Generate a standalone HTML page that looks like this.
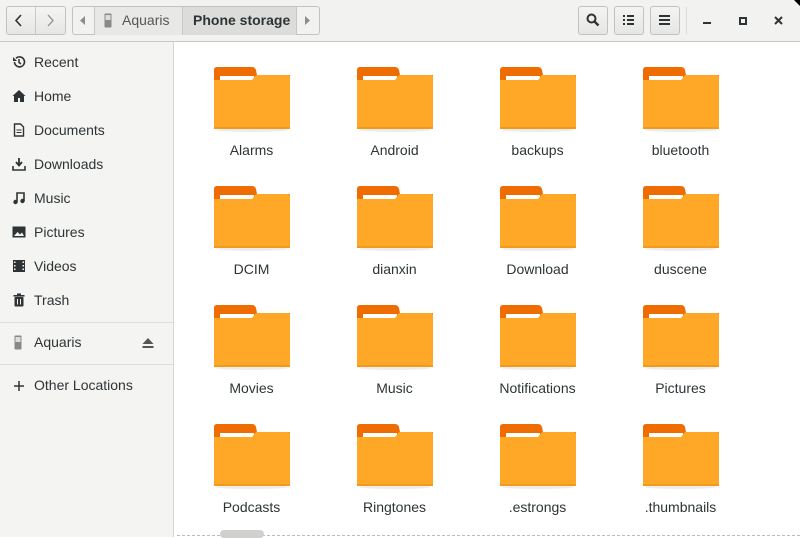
<!DOCTYPE html>
<html><head><style>
*{margin:0;padding:0;box-sizing:border-box}
body{width:800px;height:537px;overflow:hidden;background:#fff;font-family:"Liberation Sans","DejaVu Sans",sans-serif;font-size:14px;color:#2e3436;position:relative}
.hdr{position:absolute;left:0;top:0;width:800px;height:42px;background:#f2f2f1;border-bottom:1px solid #c8c8c5}
.btn{position:absolute;top:6px;height:29px;border:1px solid #c2c2be;border-radius:3px;background:linear-gradient(#f4f4f3,#e6e6e4)}
.side{position:absolute;left:0;top:42px;width:174px;height:495px;background:#f4f4f2;border-right:1px solid #d5d5d2}
.si{position:absolute;left:34px;font-size:14px;color:#2e3436}
.ic{position:absolute;left:12px;width:14px;height:14px}
.sep{position:absolute;left:0;width:173px;height:1px;background:#ddd}
.f{position:absolute;width:143px;text-align:center}
.f svg{display:block;margin:0 auto}
.f div{margin-top:9px;font-size:14px;color:#2e3436}
</style></head><body>
<div class="hdr">
 <div class="btn" style="left:6px;width:60px"></div>
 <div style="position:absolute;left:35px;top:7px;width:1px;height:27px;background:#c8c8c5"></div>
 <svg style="position:absolute;left:14px;top:14px" width="10" height="13"><path d="M7 1L2 6.5L7 12" stroke="#2e3436" stroke-width="1.6" fill="none"/></svg>
 <svg style="position:absolute;left:45px;top:14px" width="10" height="13"><path d="M3 1L8 6.5L3 12" stroke="#8a8e8f" stroke-width="1.3" fill="none"/></svg>
 <div class="btn" style="left:72px;width:248px;background:#f2f2f1"></div>
 <div style="position:absolute;left:94px;top:7px;width:88px;height:28px;background:#e8e8e6;border-left:1px solid #c8c8c5"></div>
 <div style="position:absolute;left:182px;top:7px;width:115px;height:28px;background:#dcdcda;border-left:1px solid #c8c8c5;border-right:1px solid #c8c8c5"></div>
 <svg style="position:absolute;left:80px;top:16px" width="6" height="9"><path d="M5 0L0 4.5L5 9z" fill="#8a8e8f"/></svg>
 <svg style="position:absolute;left:305px;top:16px" width="6" height="9"><path d="M0 0L5 4.5L0 9z" fill="#8a8e8f"/></svg>
 <svg style="position:absolute;left:104px;top:13px" width="8" height="15"><rect x="0.5" y="0.5" width="7" height="14" rx="1" fill="#888a85"/><rect x="1.5" y="2" width="5" height="5" fill="#ddd"/></svg>
 <div style="position:absolute;left:122px;top:12px;color:#555753">Aquaris</div>
 <div style="position:absolute;left:193px;top:12px;font-weight:bold;color:#2e3436">Phone storage</div>
 <div class="btn" style="left:578px;width:30px"></div>
 <svg style="position:absolute;left:586px;top:13px" width="14" height="14"><circle cx="5.5" cy="5.5" r="4" stroke="#2e3436" stroke-width="2" fill="none"/><path d="M8.5 8.5L12.5 12.5" stroke="#2e3436" stroke-width="2.4"/></svg>
 <div class="btn" style="left:614px;width:30px"></div>
 <svg style="position:absolute;left:623px;top:15px" width="12" height="11"><g fill="#2e3436"><rect x="0" y="0" width="2" height="2"/><rect x="0" y="4" width="2" height="2"/><rect x="0" y="8" width="2" height="2"/><rect x="4" y="0" width="7" height="2"/><rect x="4" y="4" width="7" height="2"/><rect x="4" y="8" width="7" height="2"/></g></svg>
 <div class="btn" style="left:650px;width:30px"></div>
 <svg style="position:absolute;left:659px;top:15px" width="12" height="11"><g fill="#2e3436"><rect x="0" y="0" width="11" height="2"/><rect x="0" y="4" width="11" height="2"/><rect x="0" y="8" width="11" height="2"/></g></svg>
 <div style="position:absolute;left:686px;top:7px;width:1px;height:27px;background:#dcdcda"></div>
 <div style="position:absolute;left:703px;top:22px;width:8px;height:2px;background:#2e3436"></div>
 <div style="position:absolute;left:739px;top:17px;width:8px;height:8px;border:2px solid #2e3436"></div>
 <svg style="position:absolute;left:774px;top:16px" width="10" height="10"><path d="M1 1L8 8M8 1L1 8" stroke="#2e3436" stroke-width="2"/></svg>
</div>
<div style="position:absolute;right:0;top:0;width:0;height:0;border-top:6px solid #000;border-left:6px solid transparent"></div>
<div class="side">
 <svg class="ic" style="top:13px" viewBox="0 0 14 14"><path d="M2.5 7A5 5 0 1 0 4 3.3" stroke="#2e3436" stroke-width="1.6" fill="none"/><path d="M1 2v4h4z" fill="#2e3436"/><path d="M7 4v3.5l2 1.5" stroke="#2e3436" stroke-width="1.5" fill="none"/></svg>
 <div class="si" style="top:12px">Recent</div>
 <svg class="ic" style="top:47px" viewBox="0 0 14 14"><path d="M7 1L0.5 7H2v6h4V9h2v4h4V7h1.5z" fill="#2e3436"/></svg>
 <div class="si" style="top:46px">Home</div>
 <svg class="ic" style="top:81px" viewBox="0 0 14 14"><path d="M2.5 1h6l3 3v9h-9z" stroke="#2e3436" stroke-width="1.4" fill="none"/><path d="M4.5 7h5M4.5 9.5h5" stroke="#2e3436"/></svg>
 <div class="si" style="top:80px">Documents</div>
 <svg class="ic" style="top:115px" viewBox="0 0 14 14"><path d="M7 1v7M4 5l3 3.5L10 5" stroke="#2e3436" stroke-width="1.8" fill="none"/><path d="M1 9v4h12V9" stroke="#2e3436" stroke-width="1.6" fill="none"/></svg>
 <div class="si" style="top:114px">Downloads</div>
 <svg class="ic" style="top:149px" viewBox="0 0 14 14"><path d="M5 11V2h7v8" stroke="#2e3436" stroke-width="1.6" fill="none"/><circle cx="3.5" cy="11" r="2.2" fill="#2e3436"/><circle cx="10.5" cy="10" r="2.2" fill="#2e3436"/></svg>
 <div class="si" style="top:148px">Music</div>
 <svg class="ic" style="top:183px" viewBox="0 0 14 14"><rect x="0.5" y="1.5" width="13" height="11" fill="#2e3436"/><path d="M2 11l3.5-4 2.5 2.5 2-2 2 3.5z" fill="#f4f4f2"/></svg>
 <div class="si" style="top:182px">Pictures</div>
 <svg class="ic" style="top:217px" viewBox="0 0 14 14"><rect x="1" y="1" width="12" height="12" fill="#2e3436"/><g fill="#f4f4f2"><rect x="2" y="2.5" width="1.5" height="1.5"/><rect x="2" y="6" width="1.5" height="1.5"/><rect x="2" y="9.5" width="1.5" height="1.5"/><rect x="10.5" y="2.5" width="1.5" height="1.5"/><rect x="10.5" y="6" width="1.5" height="1.5"/><rect x="10.5" y="9.5" width="1.5" height="1.5"/></g></svg>
 <div class="si" style="top:216px">Videos</div>
 <svg class="ic" style="top:251px" viewBox="0 0 14 14"><rect x="2.5" y="4" width="9" height="9.5" rx="1" fill="#2e3436"/><rect x="1.5" y="2" width="11" height="1.6" fill="#2e3436"/><rect x="5" y="0.5" width="4" height="1.6" fill="#2e3436"/><path d="M5.5 6v5.5M8.5 6v5.5" stroke="#f4f4f2"/></svg>
 <div class="si" style="top:250px">Trash</div>
 <div class="sep" style="top:280px"></div>
 <svg class="ic" style="top:293px;left:14px;width:8px;height:15px"><rect x="0.5" y="0.5" width="7" height="14" rx="1" fill="#888a85"/><rect x="1.5" y="2" width="5" height="5" fill="#ddd"/></svg>
 <div class="si" style="top:292px">Aquaris</div>
 <svg style="position:absolute;left:142px;top:296px" width="12" height="10"><path d="M6 0L11.5 6H0.5z M0.5 8h11v2h-11z" fill="#555753"/></svg>
 <div class="sep" style="top:322px"></div>
 <svg class="ic" style="top:337px" viewBox="0 0 14 14"><path d="M7 2v10M2 7h10" stroke="#2e3436" stroke-width="1.5"/></svg>
 <div class="si" style="top:335px">Other Locations</div>
</div>
<svg width="0" height="0" style="position:absolute"><defs><g id="fd">
<ellipse cx="38" cy="63" rx="36" ry="2" fill="#000" opacity="0.07"/>
<path d="M0 3Q0 0 3 0H38Q41 0 42 3L43 8H76V20H0z" fill="#ef6c00"/>
<rect x="6" y="9" width="34" height="5" fill="#fff"/>
<path d="M0 13H38L42 8H74Q76 8 76 10V62H0z" fill="#ffa726"/>
<rect x="0" y="60" width="76" height="2" fill="#f39a1d"/>
</g></defs></svg>
<div class="f" style="left:180px;top:67px"><svg width="76" height="66"><use href="#fd"/></svg><div>Alarms</div></div>
<div class="f" style="left:323px;top:67px"><svg width="76" height="66"><use href="#fd"/></svg><div>Android</div></div>
<div class="f" style="left:466px;top:67px"><svg width="76" height="66"><use href="#fd"/></svg><div>backups</div></div>
<div class="f" style="left:609px;top:67px"><svg width="76" height="66"><use href="#fd"/></svg><div>bluetooth</div></div>
<div class="f" style="left:180px;top:186px"><svg width="76" height="66"><use href="#fd"/></svg><div>DCIM</div></div>
<div class="f" style="left:323px;top:186px"><svg width="76" height="66"><use href="#fd"/></svg><div>dianxin</div></div>
<div class="f" style="left:466px;top:186px"><svg width="76" height="66"><use href="#fd"/></svg><div>Download</div></div>
<div class="f" style="left:609px;top:186px"><svg width="76" height="66"><use href="#fd"/></svg><div>duscene</div></div>
<div class="f" style="left:180px;top:305px"><svg width="76" height="66"><use href="#fd"/></svg><div>Movies</div></div>
<div class="f" style="left:323px;top:305px"><svg width="76" height="66"><use href="#fd"/></svg><div>Music</div></div>
<div class="f" style="left:466px;top:305px"><svg width="76" height="66"><use href="#fd"/></svg><div>Notifications</div></div>
<div class="f" style="left:609px;top:305px"><svg width="76" height="66"><use href="#fd"/></svg><div>Pictures</div></div>
<div class="f" style="left:180px;top:424px"><svg width="76" height="66"><use href="#fd"/></svg><div>Podcasts</div></div>
<div class="f" style="left:323px;top:424px"><svg width="76" height="66"><use href="#fd"/></svg><div>Ringtones</div></div>
<div class="f" style="left:466px;top:424px"><svg width="76" height="66"><use href="#fd"/></svg><div>.estrongs</div></div>
<div class="f" style="left:609px;top:424px"><svg width="76" height="66"><use href="#fd"/></svg><div>.thumbnails</div></div>
<div style="position:absolute;left:177px;top:535px;width:623px;border-top:1px dashed #bbb"></div>
<div style="position:absolute;left:220px;top:530px;width:44px;height:8px;border-radius:4px;background:#d0d0ce"></div>
</body></html>
